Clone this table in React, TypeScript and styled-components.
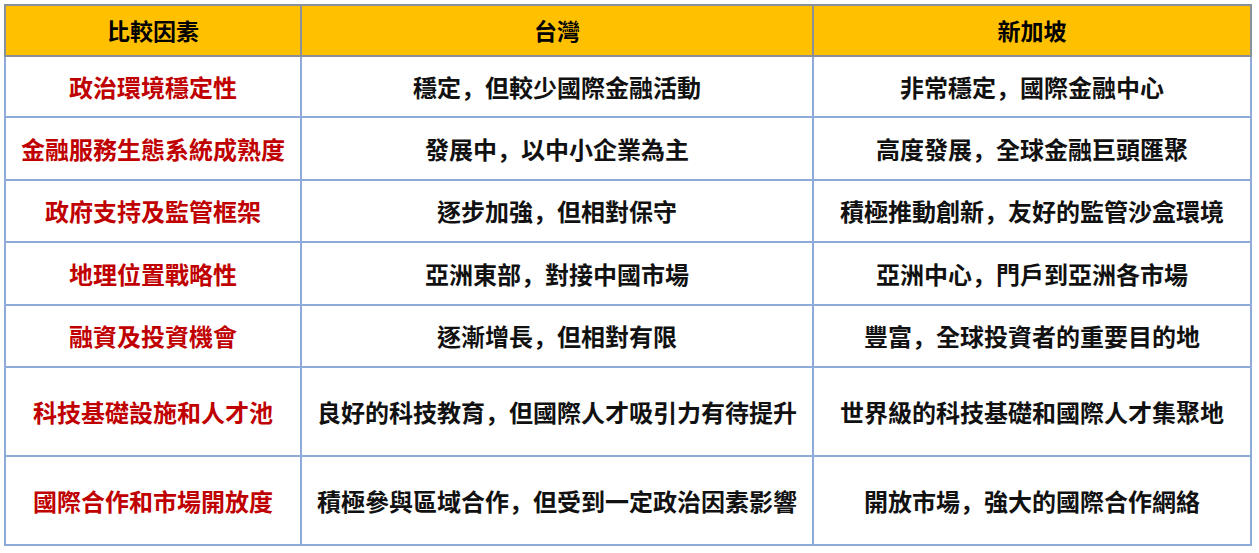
import React from "react";
import styled, { createGlobalStyle } from "styled-components";

const Global = createGlobalStyle`
  html, body { margin: 0; padding: 0; background: #ffffff; }
  body { font-family: "Noto Sans CJK TC", "Noto Sans", sans-serif; }
`;

const Page = styled.div`
  padding: 4px 0 0 4px;
`;

const Table = styled.table`
  border-collapse: collapse;
  table-layout: fixed;
  width: 1246px;
`;

const HeadCell = styled.th`
  background: #ffc000;
  color: #000000;
  font-weight: 700;
  font-size: 23px;
  height: 49px;
  padding: 0;
  text-align: center;
  border: 2px solid #8a8f99;
  line-height: 1;
`;

const Cell = styled.td<{ $factor?: boolean; $h: number }>`
  height: ${(p) => p.$h}px;
  padding: 0;
  text-align: center;
  vertical-align: middle;
  font-size: 24px;
  font-weight: 700;
  line-height: 1;
  color: ${(p) => (p.$factor ? "#c00000" : "#111111")};
  border: 2px solid #8eaadb;
  white-space: nowrap;
`;

const Comma = styled.span`
  font-family: "Noto Sans CJK SC", "Noto Sans CJK TC", sans-serif;
`;

const withCommas = (s: string) =>
  s.split("，").flatMap((part, i) =>
    i === 0 ? [part] : [<Comma key={i}>，</Comma>, part]
  );

const rows: { f: string; tw: string; sg: string; h: number }[] = [
  { f: "政治環境穩定性", tw: "穩定，但較少國際金融活動", sg: "非常穩定，國際金融中心", h: 59 },
  { f: "金融服務生態系統成熟度", tw: "發展中，以中小企業為主", sg: "高度發展，全球金融巨頭匯聚", h: 61 },
  { f: "政府支持及監管框架", tw: "逐步加強，但相對保守", sg: "積極推動創新，友好的監管沙盒環境", h: 60 },
  { f: "地理位置戰略性", tw: "亞洲東部，對接中國市場", sg: "亞洲中心，門戶到亞洲各市場", h: 61 },
  { f: "融資及投資機會", tw: "逐漸增長，但相對有限", sg: "豐富，全球投資者的重要目的地", h: 60 },
  { f: "科技基礎設施和人才池", tw: "良好的科技教育，但國際人才吸引力有待提升", sg: "世界級的科技基礎和國際人才集聚地", h: 87 },
  { f: "國際合作和市場開放度", tw: "積極參與區域合作，但受到一定政治因素影響", sg: "開放市場，強大的國際合作網絡", h: 87 },
];

export default function App() {
  return (
    <>
      <Global />
      <Page>
        <Table>
          <colgroup>
            <col style={{ width: 296 }} />
            <col style={{ width: 512 }} />
            <col style={{ width: 438 }} />
          </colgroup>
          <thead>
            <tr>
              <HeadCell>比較因素</HeadCell>
              <HeadCell>台灣</HeadCell>
              <HeadCell>新加坡</HeadCell>
            </tr>
          </thead>
          <tbody>
            {rows.map((r) => (
              <tr key={r.f}>
                <Cell $factor $h={r.h}>{r.f}</Cell>
                <Cell $h={r.h}>{withCommas(r.tw)}</Cell>
                <Cell $h={r.h}>{withCommas(r.sg)}</Cell>
              </tr>
            ))}
          </tbody>
        </Table>
      </Page>
    </>
  );
}
